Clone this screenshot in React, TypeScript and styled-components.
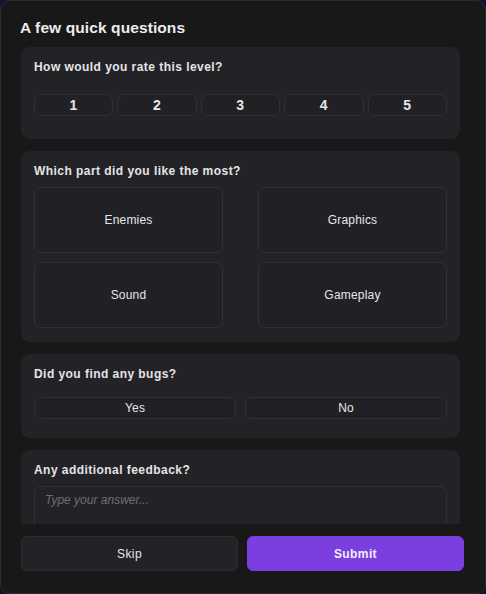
import React from "react";
import styled, { createGlobalStyle } from "styled-components";

const Global = createGlobalStyle`
  html, body { margin: 0; padding: 0; background: #16112e; }
  body { font-family: "Liberation Sans", Arial, sans-serif; }
  * { box-sizing: border-box; }
`;

const Panel = styled.div`
  width: 486px;
  height: 594px;
  background: #181818;
  border: 1px solid #2c2c34;
  border-radius: 10px;
  display: flex;
  flex-direction: column;
  overflow: hidden;
  color: #e8e8ea;
`;

const Title = styled.h2`
  margin: 0;
  padding: 18px 19px 0;
  height: 46px;
  font-size: 15.5px;
  font-weight: 700;
  letter-spacing: 0.1px;
  color: #ececee;
`;

const Scroll = styled.div`
  flex: 1;
  overflow: hidden;
  padding: 0 25px 0 20px;
  display: flex;
  flex-direction: column;
  gap: 12px;
`;

const Card = styled.section<{ $pb?: number }>`
  background: #232327;
  border-radius: 9px;
  padding: 13px 13px ${(p) => p.$pb ?? 14}px;
  flex-shrink: 0;
`;

const Question = styled.div<{ $mb: number }>`
  font-size: 12px;
  font-weight: 700;
  letter-spacing: 0.45px;
  color: #e4e4e6;
  line-height: 15px;
  margin-bottom: ${(p) => p.$mb}px;
`;

const RatingRow = styled.div`
  display: grid;
  grid-template-columns: repeat(5, 1fr);
  gap: 4px;
`;

const OptionButton = styled.button<{ $h: number; $bold?: boolean }>`
  height: ${(p) => p.$h}px;
  background: #212125;
  border: 1px solid #303036;
  border-radius: 7px;
  color: #e6e6e8;
  font-family: "Liberation Sans", Arial, sans-serif;
  font-size: ${(p) => (p.$bold ? 14 : 12)}px;
  font-weight: ${(p) => (p.$bold ? 700 : 400)};
  letter-spacing: ${(p) => (p.$bold ? 0.5 : 0.2)}px;
  padding: 0;
  cursor: pointer;
`;

const PartGrid = styled.div`
  display: grid;
  grid-template-columns: repeat(2, 189px);
  justify-content: space-between;
  row-gap: 9px;
`;

const Pair = styled.div`
  display: grid;
  grid-template-columns: 1fr 1fr;
  gap: 9px;
`;

const TextArea = styled.textarea`
  width: 100%;
  height: 70px;
  resize: none;
  background: #232327;
  border: 1px solid #303036;
  border-radius: 7px;
  padding: 6px 10px;
  color: #e6e6e8;
  font-family: "Liberation Sans", Arial, sans-serif;
  font-size: 12px;
  display: block;
  &::placeholder {
    color: #6d6d75;
    font-style: italic;
  }
`;

const Footer = styled.div`
  height: 69px;
  flex-shrink: 0;
  display: grid;
  grid-template-columns: 1fr 1fr;
  gap: 9px;
  padding: 12px 21px 22px 20px;
  background: #181818;
`;

const FooterButton = styled.button<{ $primary?: boolean }>`
  height: 35px;
  border-radius: 6px;
  border: 1px solid ${(p) => (p.$primary ? "#7b3fe0" : "#2c2c32")};
  background: ${(p) => (p.$primary ? "#7b3fe0" : "#232327")};
  color: ${(p) => (p.$primary ? "#f3eefd" : "#e6e6e8")};
  font-family: "Liberation Sans", Arial, sans-serif;
  font-size: 12px;
  font-weight: ${(p) => (p.$primary ? 700 : 400)};
  letter-spacing: 0.4px;
  cursor: pointer;
`;

export default function App() {
  return (
    <>
      <Global />
      <Panel>
        <Title>A few quick questions</Title>
        <Scroll>
          <Card $pb={23}>
            <Question $mb={19}>How would you rate this level?</Question>
            <RatingRow>
              {[1, 2, 3, 4, 5].map((n) => (
                <OptionButton key={n} $h={22} $bold>
                  {n}
                </OptionButton>
              ))}
            </RatingRow>
          </Card>
          <Card>
            <Question $mb={8}>Which part did you like the most?</Question>
            <PartGrid>
              {["Enemies", "Graphics", "Sound", "Gameplay"].map((t) => (
                <OptionButton key={t} $h={66}>
                  {t}
                </OptionButton>
              ))}
            </PartGrid>
          </Card>
          <Card $pb={19}>
            <Question $mb={15}>Did you find any bugs?</Question>
            <Pair>
              <OptionButton $h={22}>Yes</OptionButton>
              <OptionButton $h={22}>No</OptionButton>
            </Pair>
          </Card>
          <Card>
            <Question $mb={8}>Any additional feedback?</Question>
            <TextArea placeholder="Type your answer..." />
          </Card>
        </Scroll>
        <Footer>
          <FooterButton>Skip</FooterButton>
          <FooterButton $primary>Submit</FooterButton>
        </Footer>
      </Panel>
    </>
  );
}
